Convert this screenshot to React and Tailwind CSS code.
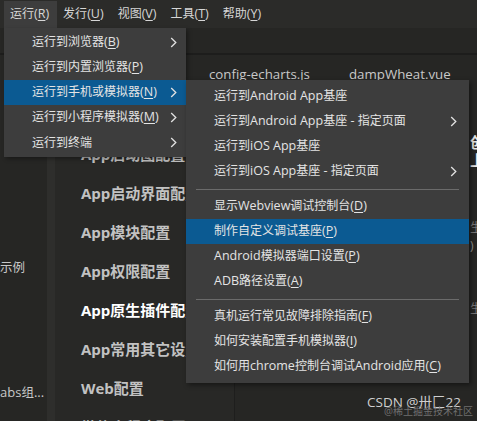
import React from "react";

const FONT = { fontFamily: '"Open Sans", "Noto Sans CJK SC", sans-serif' };

function Mixed({ text, latinClass = "text-[12.5px]" }) {
  const parts = text.split(/([\x20-\x7e]+)/).filter((p) => p.length);
  return (
    <>
      {parts.map((p, i) =>
        /^[\x20-\x7e]+$/.test(p) ? (
          <span key={i} className={latinClass}>
            {p}
          </span>
        ) : (
          <span key={i}>{p}</span>
        )
      )}
    </>
  );
}

function Label({ label, k }) {
  return (
    <span className="whitespace-pre">
      <Mixed text={label} />
      {k && (
        <span className="text-[12.5px]">
          (<span className="underline underline-offset-2">{k}</span>)
        </span>
      )}
    </span>
  );
}

function Chevron() {
  return (
    <svg width="7" height="11" viewBox="0 0 7 11" className="shrink-0">
      <polyline points="1.2,1 5.8,5.5 1.2,10" fill="none" stroke="#e2e2e2" strokeWidth="1.3" />
    </svg>
  );
}

function Row({ label, k, sub, active, pr }) {
  return (
    <div
      className={`flex h-[25px] items-center justify-between pl-[28px] ${pr} text-[12px] text-[#e4e4e4] ${
        active ? "bg-[#0b5a92]" : ""
      }`}
    >
      <Label label={label} k={k} />
      {sub && <Chevron />}
    </div>
  );
}

function Sep() {
  return (
    <div className="flex h-[10px] items-center px-[10px]">
      <div className="h-px w-full bg-[#6b6b6b]" />
    </div>
  );
}

export default function App() {
  const top = [
    ["运行", "R"],
    ["发行", "U"],
    ["视图", "V"],
    ["工具", "T"],
    ["帮助", "Y"],
  ];
  const nav = [
    "App图标配置",
    "App启动图配置",
    "App启动界面配置",
    "App模块配置",
    "App权限配置",
    "App原生插件配置",
    "App常用其它设置",
    "Web配置",
    "微信小程序配置",
  ];
  return (
    <div className="relative flex h-[421px] w-[477px] flex-col overflow-hidden bg-[#262624]" style={FONT}>
      {/* menu bar */}
      <div className="flex h-[28px] shrink-0 items-stretch bg-[#2b2b29] pl-[4px] pt-[1px] text-[12px] text-[#d6d6d6]">
        {top.map(([t, k], i) => (
          <div
            key={t}
            className={`flex items-center pl-[6px] pr-[8px] ${i === 0 ? "bg-[#3d3d3d]" : ""}`}
          >
            <Label label={t} k={k} />
          </div>
        ))}
      </div>
      {/* toolbar */}
      <div className="h-[27px] shrink-0 border-b-2 border-[#1d1d1c] bg-[#262624]" />
      {/* body */}
      <div className="flex min-h-0 flex-1 overflow-hidden">
        <div className="flex w-[47px] shrink-0 flex-col overflow-hidden pt-[203px] text-[12.5px] text-[#c8c8c8]">
          <div className="h-[20px] whitespace-nowrap leading-[20px]">示例</div>
          <div className="mt-[104px] h-[20px] whitespace-nowrap leading-[20px]">
            <Mixed text="abs组..." latinClass="text-[13px]" />
          </div>
        </div>
        <div className="w-[8px] shrink-0 bg-[#2e2e2c]" />
        <div className="flex min-w-0 flex-1 flex-col overflow-hidden">
          <div className="flex h-[37px] shrink-0 items-center gap-[39px] pl-[154px] pt-[2px] text-[13.3px] text-[#c9c9c9]">
            <span>config-echarts.js</span>
            <span>dampWheat.vue</span>
          </div>
          <div className="flex min-h-0 flex-1 overflow-hidden">
            <div className="w-[180px] shrink-0 overflow-hidden border-r border-[#1e1e1d] bg-[#282826] pt-[4px] pl-[26px]">
              {nav.map((n) => (
                <div
                  key={n}
                  className={`flex h-[39px] items-center whitespace-nowrap text-[15px] font-bold ${
                    n === "App原生插件配置" ? "text-white" : "text-[#c2c2c2]"
                  }`}
                >
                  <Mixed text={n} latinClass="text-[15px]" />
                </div>
              ))}
            </div>
            <div className="flex min-w-0 flex-1 flex-col overflow-hidden pl-[235px] text-[15px] font-bold">
              <div className="mt-[41px] h-[18px] whitespace-nowrap leading-[18px] text-[#e8e8e8]">创建</div>
              <div className="h-[18px] whitespace-nowrap leading-[18px] text-[#e8e8e8]">上传</div>
              <div className="mt-[50px] h-[18px] whitespace-nowrap text-[12px] font-normal leading-[18px] text-[#777]">生成</div>
              <div className="h-[18px] whitespace-nowrap text-[12px] font-normal leading-[18px] text-[#999]">)</div>
              <div className="mt-[45px] h-[18px] whitespace-nowrap text-[12px] font-normal leading-[18px] text-[#777]">生成</div>
            </div>
          </div>
        </div>
      </div>

      {/* first dropdown */}
      <div className="absolute left-[4px] top-[28px] w-[182px] bg-[#3d3d3d] pt-[2px] pb-[2px] shadow-[2px_2px_4px_rgba(0,0,0,0.35)]">
        <Row label="运行到浏览器" k="B" sub pr="pr-[9px]" />
        <Row label="运行到内置浏览器" k="P" pr="pr-[9px]" />
        <Row label="运行到手机或模拟器" k="N" sub active pr="pr-[9px]" />
        <Row label="运行到小程序模拟器" k="M" sub pr="pr-[9px]" />
        <Row label="运行到终端" sub pr="pr-[9px]" />
      </div>

      {/* second dropdown */}
      <div className="absolute left-[186px] top-[80px] w-[283px] bg-[#3d3d3d] pt-[4px] pb-[4px] shadow-[2px_2px_5px_rgba(0,0,0,0.45)]">
        <Row label="运行到Android App基座" pr="pr-[12px]" />
        <Row label="运行到Android App基座 - 指定页面" sub pr="pr-[12px]" />
        <Row label="运行到iOS App基座" pr="pr-[12px]" />
        <Row label="运行到iOS App基座 - 指定页面" sub pr="pr-[12px]" />
        <Sep />
        <Row label="显示Webview调试控制台" k="D" pr="pr-[12px]" />
        <Row label="制作自定义调试基座" k="P" active pr="pr-[12px]" />
        <Row label="Android模拟器端口设置" k="P" pr="pr-[12px]" />
        <Row label="ADB路径设置" k="A" pr="pr-[12px]" />
        <Sep />
        <Row label="真机运行常见故障排除指南" k="F" pr="pr-[12px]" />
        <Row label="如何安装配置手机模拟器" k="I" pr="pr-[12px]" />
        <Row label="如何用chrome控制台调试Android应用" k="C" pr="pr-[12px]" />
      </div>

      {/* watermark */}
      <div className="absolute left-[367px] top-[393px] whitespace-nowrap text-[13.5px] leading-[18px] text-[#cfcfcf]">
        CSDN @卅匚22
      </div>
      <div className="absolute left-[384px] top-[405px] whitespace-nowrap text-[10px] leading-[12px] text-[#6f6f6f]">
        @稀土掘金技术社区
      </div>
    </div>
  );
}
